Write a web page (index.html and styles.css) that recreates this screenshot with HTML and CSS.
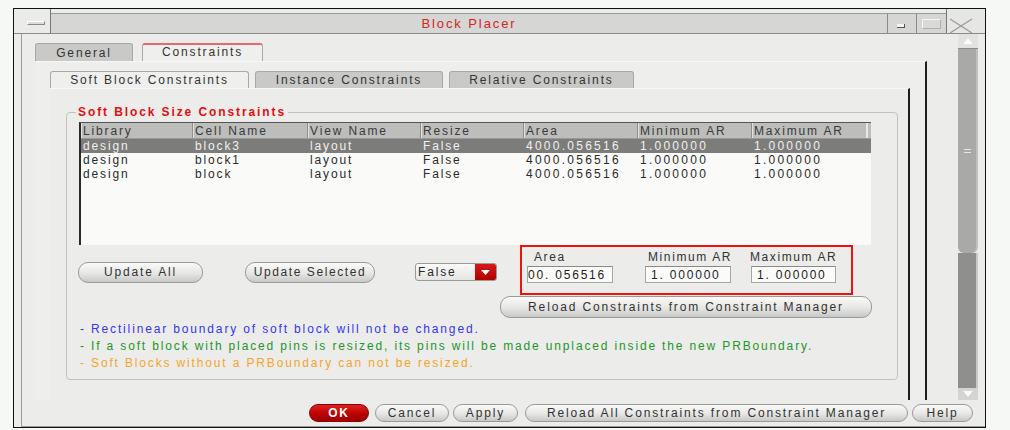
FILE: index.html
```html
<!DOCTYPE html>
<html>
<head>
<meta charset="utf-8">
<title>Block Placer</title>
<link rel="stylesheet" href="styles.css">
</head>
<body>
<div class="window">
  <div class="titlebar">
    <div class="tb-menu"><span class="menu-glyph"></span></div>
    <div class="tb-mid">
      <div class="tb-title">Block Placer</div>
      <div class="tb-btn tb-min"><span class="min-glyph"></span></div>
      <div class="tb-btn tb-max"><span class="max-glyph"></span></div>
    </div>
    <div class="tb-close">
      <svg width="26" height="16" viewBox="0 0 26 16"><path d="M2 1 L24 15 M24 1 L2 15" stroke="#9a9a9a" stroke-width="1.3" fill="none"/></svg>
    </div>
    <div class="tb-end"></div>
  </div>

  <div class="wbody">
    <div class="main">
      <div class="tabs outer-tabs">
        <div class="tab tab-general">General</div>
        <div class="tab tab-constraints active">Constraints</div>
      </div>
      <div class="outer-panel">
        <div class="tabs inner-tabs">
          <div class="tab itab-soft active">Soft Block Constraints</div>
          <div class="tab itab-inst">Instance Constraints</div>
          <div class="tab itab-rel">Relative Constraints</div>
        </div>
        <div class="inner-panel">
          <div class="group">
            <div class="legend">Soft Block Size Constraints</div>
            <div class="table">
              <div class="row head">
                <div class="c c1">Library</div><div class="c c2">Cell Name</div><div class="c c3">View Name</div><div class="c c4">Resize</div><div class="c c5">Area</div><div class="c c6">Minimum AR</div><div class="c c7">Maximum AR</div>
              </div>
              <div class="row sel">
                <div class="c c1">design</div><div class="c c2">block3</div><div class="c c3">layout</div><div class="c c4">False</div><div class="c c5 num">4000.056516</div><div class="c c6 num">1.000000</div><div class="c c7 num">1.000000</div>
              </div>
              <div class="row">
                <div class="c c1">design</div><div class="c c2">block1</div><div class="c c3">layout</div><div class="c c4">False</div><div class="c c5 num">4000.056516</div><div class="c c6 num">1.000000</div><div class="c c7 num">1.000000</div>
              </div>
              <div class="row">
                <div class="c c1">design</div><div class="c c2">block</div><div class="c c3">layout</div><div class="c c4">False</div><div class="c c5 num">4000.056516</div><div class="c c6 num">1.000000</div><div class="c c7 num">1.000000</div>
              </div>
            </div>
            <div class="controls">
              <div class="btn btn-upall">Update All</div>
              <div class="btn btn-upsel">Update Selected</div>
              <div class="dropdown"><span class="dd-text">False</span><span class="dd-arrow"><svg width="9" height="5" viewBox="0 0 9 5"><path d="M0 0 L9 0 L4.5 5 Z" fill="#fff"/></svg></span></div>
              <div class="redbox">
                <div class="field f-area"><div class="flabel">Area</div><div class="finput">00. 056516</div></div>
                <div class="field f-min"><div class="flabel">Minimum AR</div><div class="finput">1. 000000</div></div>
                <div class="field f-max"><div class="flabel">Maximum AR</div><div class="finput">1. 000000</div></div>
              </div>
            </div>
            <div class="reload-row"><div class="btn btn-reload">Reload Constraints from Constraint Manager</div></div>
            <div class="notes">
              <div class="note blue">- Rectilinear boundary of soft block will not be changed.</div>
              <div class="note green">- If a soft block with placed pins is resized, its pins will be made unplaced inside the new PRBoundary.</div>
              <div class="note orange">- Soft Blocks without a PRBoundary can not be resized.</div>
            </div>
          </div>
        </div>
      </div>
    </div>
    <div class="scrollcol">
      <div class="scrollbar">
        <div class="sb-up"><svg width="10" height="6" viewBox="0 0 10 6"><path d="M0 6 L5 0 L10 6 Z" fill="#fafafa"/></svg></div>
        <div class="sb-thumb"><span class="grip"></span><span class="grip"></span></div>
        <div class="sb-trough"></div>
        <div class="sb-down"><svg width="10" height="6" viewBox="0 0 10 6"><path d="M0 0 L10 0 L5 6 Z" fill="#fafafa"/></svg></div>
      </div>
    </div>
  </div>

  <div class="footer">
    <div class="btn fbtn ok">OK</div>
    <div class="btn fbtn cancel">Cancel</div>
    <div class="btn fbtn apply">Apply</div>
    <div class="btn fbtn reloadall">Reload All Constraints from Constraint Manager</div>
    <div class="btn fbtn help">Help</div>
  </div>
</div>
</body>
</html>
```

FILE: styles.css
```css
* { box-sizing: border-box; }
html, body { margin: 0; padding: 0; }
body {
  background: #f6f8f6;
  font-family: "Liberation Sans", Arial, sans-serif;
  font-size: 12px;
  letter-spacing: 1.85px;
  color: #2a2a2a;
}
.window {
  margin: 8px 0 0 13px;
  width: 973px;
  height: 420px;
  border: 1px solid #111;
  background: #ececea;
  display: flex;
  flex-direction: column;
}

/* title bar */
.titlebar {
  height: 25px;
  display: flex;
  background: #ebebe9;
  border-bottom: 1px solid #8a8a8a;
}
.tb-menu {
  width: 37px;
  border-right: 1px solid #777;
  padding: 12px 0 0 13px;
}
.menu-glyph {
  display: block;
  width: 18px;
  height: 4px;
  border: 1px solid #8a8a8a;
  border-top-color: #fff;
  border-left-color: #fff;
  background: #dcdcdc;
}
.tb-mid {
  flex: 1;
  margin-top: 4px;
  border-top: 1px solid #9a9a9a;
  background: #d6d6d4;
  display: flex;
}
.tb-title {
  flex: 1;
  text-align: center;
  color: #d42424;
  font-size: 13px;
  line-height: 19px;
  letter-spacing: 1.9px;
}
.tb-btn {
  width: 29px;
  border-left: 1px solid #8a8a8a;
  display: flex;
  align-items: center;
  justify-content: center;
}
.tb-max { width: 30px; }
.min-glyph {
  width: 8px; height: 4px;
  border-right: 1px solid #555;
  border-bottom: 1px solid #555;
  background: #f4f4f4;
  margin: 4px 0 0 -2px;
}
.max-glyph {
  width: 19px; height: 10px;
  border: 1px solid #b0b0b0;
  border-top-color: #f6f6f6;
  border-left-color: #f6f6f6;
  background: #d9d9d7;
}
.tb-close {
  width: 29px;
  border-left: 1px solid #777;
  background: #e6e6e4;
  padding: 9px 0 0 1px;
}
.tb-close svg { display: block; }
.tb-end { width: 10px; background: #e6e6e4; }

/* body */
.wbody {
  height: 367px;
  display: flex;
}
.main {
  width: 942px;
  margin-left: 7px;
  border-left: 1px solid #9c9c9a;
  padding-top: 9px;
}
.tabs { display: flex; }
.tab {
  text-align: center;
  border: 1px solid #a8a8a8;
  border-bottom: none;
  border-radius: 3px 3px 0 0;
  background: #c9c9c7;
  color: #333;
  white-space: nowrap;
}
.tab.active { background: #efefed; }
.outer-tabs { margin-left: 13px; height: 18px; }
.tab-general { width: 98px; line-height: 17px; padding-top: 1px; }
.tab-constraints {
  width: 121px; margin-left: 9px;
  border-top: 2px solid #e86a6a;
  line-height: 15px;
}
.outer-panel {
  margin-left: 14px;
  width: 891px;
  height: 339px;
  border-right: 2px solid #1e1e1e;
  border-top: 1px solid #f7f7f5;
  background: #eeeeec;
  padding-top: 9px;
}
.inner-tabs { margin-left: 14px; height: 17px; }
.inner-tabs .tab { line-height: 17px; }
.itab-soft { width: 199px; }
.itab-inst { width: 188px; margin-left: 6px; }
.itab-rel { width: 185px; margin-left: 6px; }
.inner-panel {
  margin-left: 14px;
  width: 860px;
  height: 312px;
  border-right: 2px solid #1e1e1e;
  border-top: 1px solid #f7f7f5;
  background: #ececea;
  padding-top: 23px;
}
.group {
  margin-left: 16px;
  width: 832px;
  height: 268px;
  border: 1px solid #c2c2c0;
  border-radius: 4px;
  padding-left: 10px;
}
.legend {
  width: max-content;
  margin-top: -8px;
  margin-left: -1px;
  padding: 0 2px;
  background: #ececea;
  color: #e01010;
  font-weight: bold;
  line-height: 14px;
  letter-spacing: 1.9px;
}

/* table */
.table {
  margin: 3px 0 0 2px;
  width: 792px;
  height: 123px;
  background: #fafaf8;
  border-left: 2px solid #2a2a2a;
  border-top: 1px solid #555;
}
.row { display: flex; height: 14px; line-height: 14px; }
.row.head {
  height: 16px;
  line-height: 16px;
  background: #bdbdbb;
  color: #3a3a3a;
  border-bottom: 1px solid #9a9a9a;
}
.row.sel { background: #7c7c7a; color: #f0f0f0; }
.c { padding-left: 2px; white-space: nowrap; overflow: hidden; }
.c.num { letter-spacing: 2.25px; }
.head .c { border-right: 1px solid #8e8e8e; box-shadow: inset 1px 0 0 #e2e2e2; }
.c1 { width: 112px; }
.c2 { width: 115px; }
.c3 { width: 113px; }
.c4 { width: 103px; }
.c5 { width: 114px; }
.c6 { width: 114px; }
.c7 { width: 116px; }
.head .c7 { border-right: 2px solid #e8e8e8; }

/* buttons */
.btn {
  text-align: center;
  border: 1px solid #9a9a98;
  border-radius: 10px;
  background: linear-gradient(#fafaf9, #e6e6e4 55%, #c8c8c6);
  color: #333;
  white-space: nowrap;
}
.controls {
  display: flex;
  align-items: flex-start;
  height: 50px;
}
.btn-upall { margin: 17px 0 0 1px; width: 125px; height: 21px; line-height: 19px; }
.btn-upsel { margin: 17px 0 0 42px; width: 130px; height: 21px; line-height: 19px; letter-spacing: 1.6px; }
.dropdown {
  margin: 18px 0 0 40px;
  width: 82px;
  height: 18px;
  display: flex;
  border: 1px solid #9a9a98;
  border-radius: 3px;
  background: linear-gradient(#fbfbfa, #e4e4e2);
  overflow: hidden;
}
.dd-text { flex: 1; line-height: 16px; padding-left: 2px; }
.dd-arrow {
  width: 21px;
  background: linear-gradient(#d81818, #b00000);
  display: flex;
  align-items: center;
  justify-content: center;
}
.dd-arrow svg { display: block; }
.redbox {
  margin-left: 23px;
  width: 333px;
  height: 50px;
  border: 2px solid #ee1111;
  display: flex;
  padding: 3px 0 0 5px;
}
.field { width: 86px; }
.f-min { margin-left: 32px; }
.f-max { margin-left: 20px; width: 85px; }
.flabel { line-height: 15px; padding-left: 7px; color: #333; white-space: nowrap; letter-spacing: 1.6px; }
.f-min .flabel { padding-left: 3px; }
.f-max .flabel { padding-left: 0; margin-left: -1px; }
.finput {
  margin-top: 1px;
  height: 17px;
  line-height: 16px;
  background: #fbfbfa;
  border: 1px solid #a6a6a4;
  border-top-color: #8a8a88;
  padding-left: 5px;
  color: #222;
  letter-spacing: 1.8px;
  white-space: nowrap;
  overflow: hidden;
}
.f-area .finput { padding-left: 0; }
.reload-row {
  display: flex;
  justify-content: flex-end;
  padding-right: 25px;
  margin-top: 1px;
}
.btn-reload { width: 372px; height: 22px; line-height: 20px; }
.notes { margin: 3px 0 0 3px; }
.note { line-height: 17px; white-space: nowrap; }
.blue { color: #3535f0; }
.green { color: #23962a; }
.orange { color: #f4a52c; }

/* scrollbar */
.scrollcol { width: 29px; padding-left: 2px; }
.scrollbar { width: 20px; height: 366px; display: flex; flex-direction: column; }
.sb-up {
  height: 15px;
  background: #e2e2e0;
  display: flex; align-items: center; justify-content: center;
  border-bottom: 1px solid #8a8a88;
}
.sb-thumb {
  height: 204px;
  background: #a9a9a7;
  border-right: 2px solid #c0c0be;
  border-radius: 0 0 6px 6px;
  display: flex; flex-direction: column; align-items: center; justify-content: center;
  gap: 2px;
}
.grip { display: block; width: 7px; height: 1px; background: #e6e6e4; }
.sb-trough { flex: 1; background: #8f8f8d; border-right: 2px solid #c8c8c6; }
.sb-down {
  height: 12px;
  background: #d4d4d2;
  display: flex; align-items: center; justify-content: center;
}
.sb-up svg, .sb-down svg { display: block; }

/* footer */
.footer {
  height: 26px;
  display: flex;
  justify-content: flex-end;
  align-items: flex-start;
  padding: 3px 12px 0 0;
  border-bottom: 1px solid #9a9a98;
  margin: 0 0 0 7px;
  border-left: 1px solid #9c9c9a;
}
.fbtn { height: 18px; line-height: 16px; }
.ok {
  width: 60px;
  background: linear-gradient(#e02020, #b80000 60%, #9c0000);
  border-color: #8a0000;
  color: #fff;
  font-weight: bold;
}
.cancel { width: 74px; margin-left: 6px; }
.apply { width: 65px; margin-left: 4px; }
.reloadall { width: 383px; margin-left: 7px; }
.help { width: 61px; margin-left: 4px; }
```
